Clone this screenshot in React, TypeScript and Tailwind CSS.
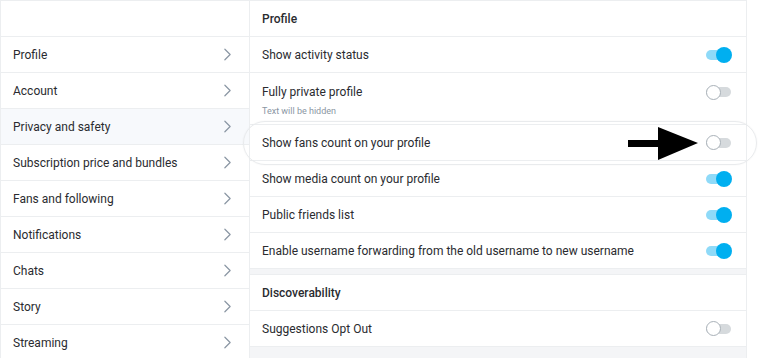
import { ChevronRight } from 'lucide-react';

const menu = [
  'Profile',
  'Account',
  'Privacy and safety',
  'Subscription price and bundles',
  'Fans and following',
  'Notifications',
  'Chats',
  'Story',
  'Streaming',
];

function Toggle({ on }: { on: boolean }) {
  return (
    <div className="relative w-[26px] h-4">
      <div
        className={
          'absolute left-0 right-[1px] top-[3px] h-[10px] rounded-full ' +
          (on ? 'bg-[#8fdaf8]' : 'bg-[#d6dadd]')
        }
      />
      {on ? (
        <div className="absolute right-0 top-0 w-4 h-4 rounded-full bg-[#00aff0]" />
      ) : (
        <div className="absolute left-0 top-[0.5px] w-[15px] h-[15px] rounded-full bg-white border-[1.5px] border-[#a9b1b8]" />
      )}
    </div>
  );
}

function Row({ label, on, sub, tall }: { label: string; on: boolean; sub?: string; tall?: boolean }) {
  return (
    <div
      className={
        'flex justify-between border-b border-[#eceef0] pl-3 pr-[14px] ' +
        (tall ? 'h-[52px] items-start pt-[11px]' : 'h-[36px] items-center')
      }
    >
      <div className="flex flex-col">
        <span className="leading-4">{label}</span>
        {sub && <span className="text-[9px] text-[#8a96a3] mt-[5px] leading-3">{sub}</span>}
      </div>
      <Toggle on={on} />
    </div>
  );
}

export default function App() {
  return (
    <div className="relative flex w-[764px] h-[358px] overflow-hidden bg-white font-['Roboto'] text-[12px] text-[#2a2b2f]">
      {/* Settings menu */}
      <aside className="w-[250px] shrink-0 border-l border-t border-r border-[#eceef0]">
        <div className="h-[36px] border-b border-[#eceef0]" />
        {menu.map((item) => (
          <div
            key={item}
            className={
              'h-[36px] flex items-center justify-between pl-3 pr-[11px] border-b border-[#eceef0] ' +
              (item === 'Privacy and safety' ? 'bg-[#f7f9fc]' : '')
            }
          >
            <span>{item}</span>
            <ChevronRight size={21} strokeWidth={1.4} className="text-[#8a96a3]" />
          </div>
        ))}
      </aside>

      {/* Privacy settings */}
      <main className="w-[497px] shrink-0 border-t border-r border-[#eceef0]">
        <div className="h-[36px] flex items-center pl-3 border-b border-[#eceef0] font-medium">Profile</div>
        <Row label="Show activity status" on />
        <Row label="Fully private profile" on={false} sub="Text will be hidden" tall />
        <Row label="Show fans count on your profile" on={false} />
        <Row label="Show media count on your profile" on />
        <Row label="Public friends list" on />
        <Row label="Enable username forwarding from the old username to new username" on />
        <div className="h-[6px] bg-[#f4f5f7] border-b border-[#eceef0]" />
        <div className="h-[36px] flex items-center pl-3 border-b border-[#eceef0] font-medium">Discoverability</div>
        <Row label="Suggestions Opt Out" on={false} />
        <div className="h-[12px] bg-[#f4f5f7]" />
      </main>

      {/* Annotation overlay */}
      <div className="absolute left-[243px] top-[121px] w-[514px] h-[44px] rounded-full border border-[#e9ebed] shadow-[0_0_2px_rgba(0,0,0,0.05)] pointer-events-none" />
      <svg className="absolute left-[627px] top-[126px]" width="72" height="36" viewBox="0 0 72 36">
        <polygon points="1,14 31,14 31,1 71,17 31,34 31,21 1,21" fill="#000" />
      </svg>
    </div>
  );
}
